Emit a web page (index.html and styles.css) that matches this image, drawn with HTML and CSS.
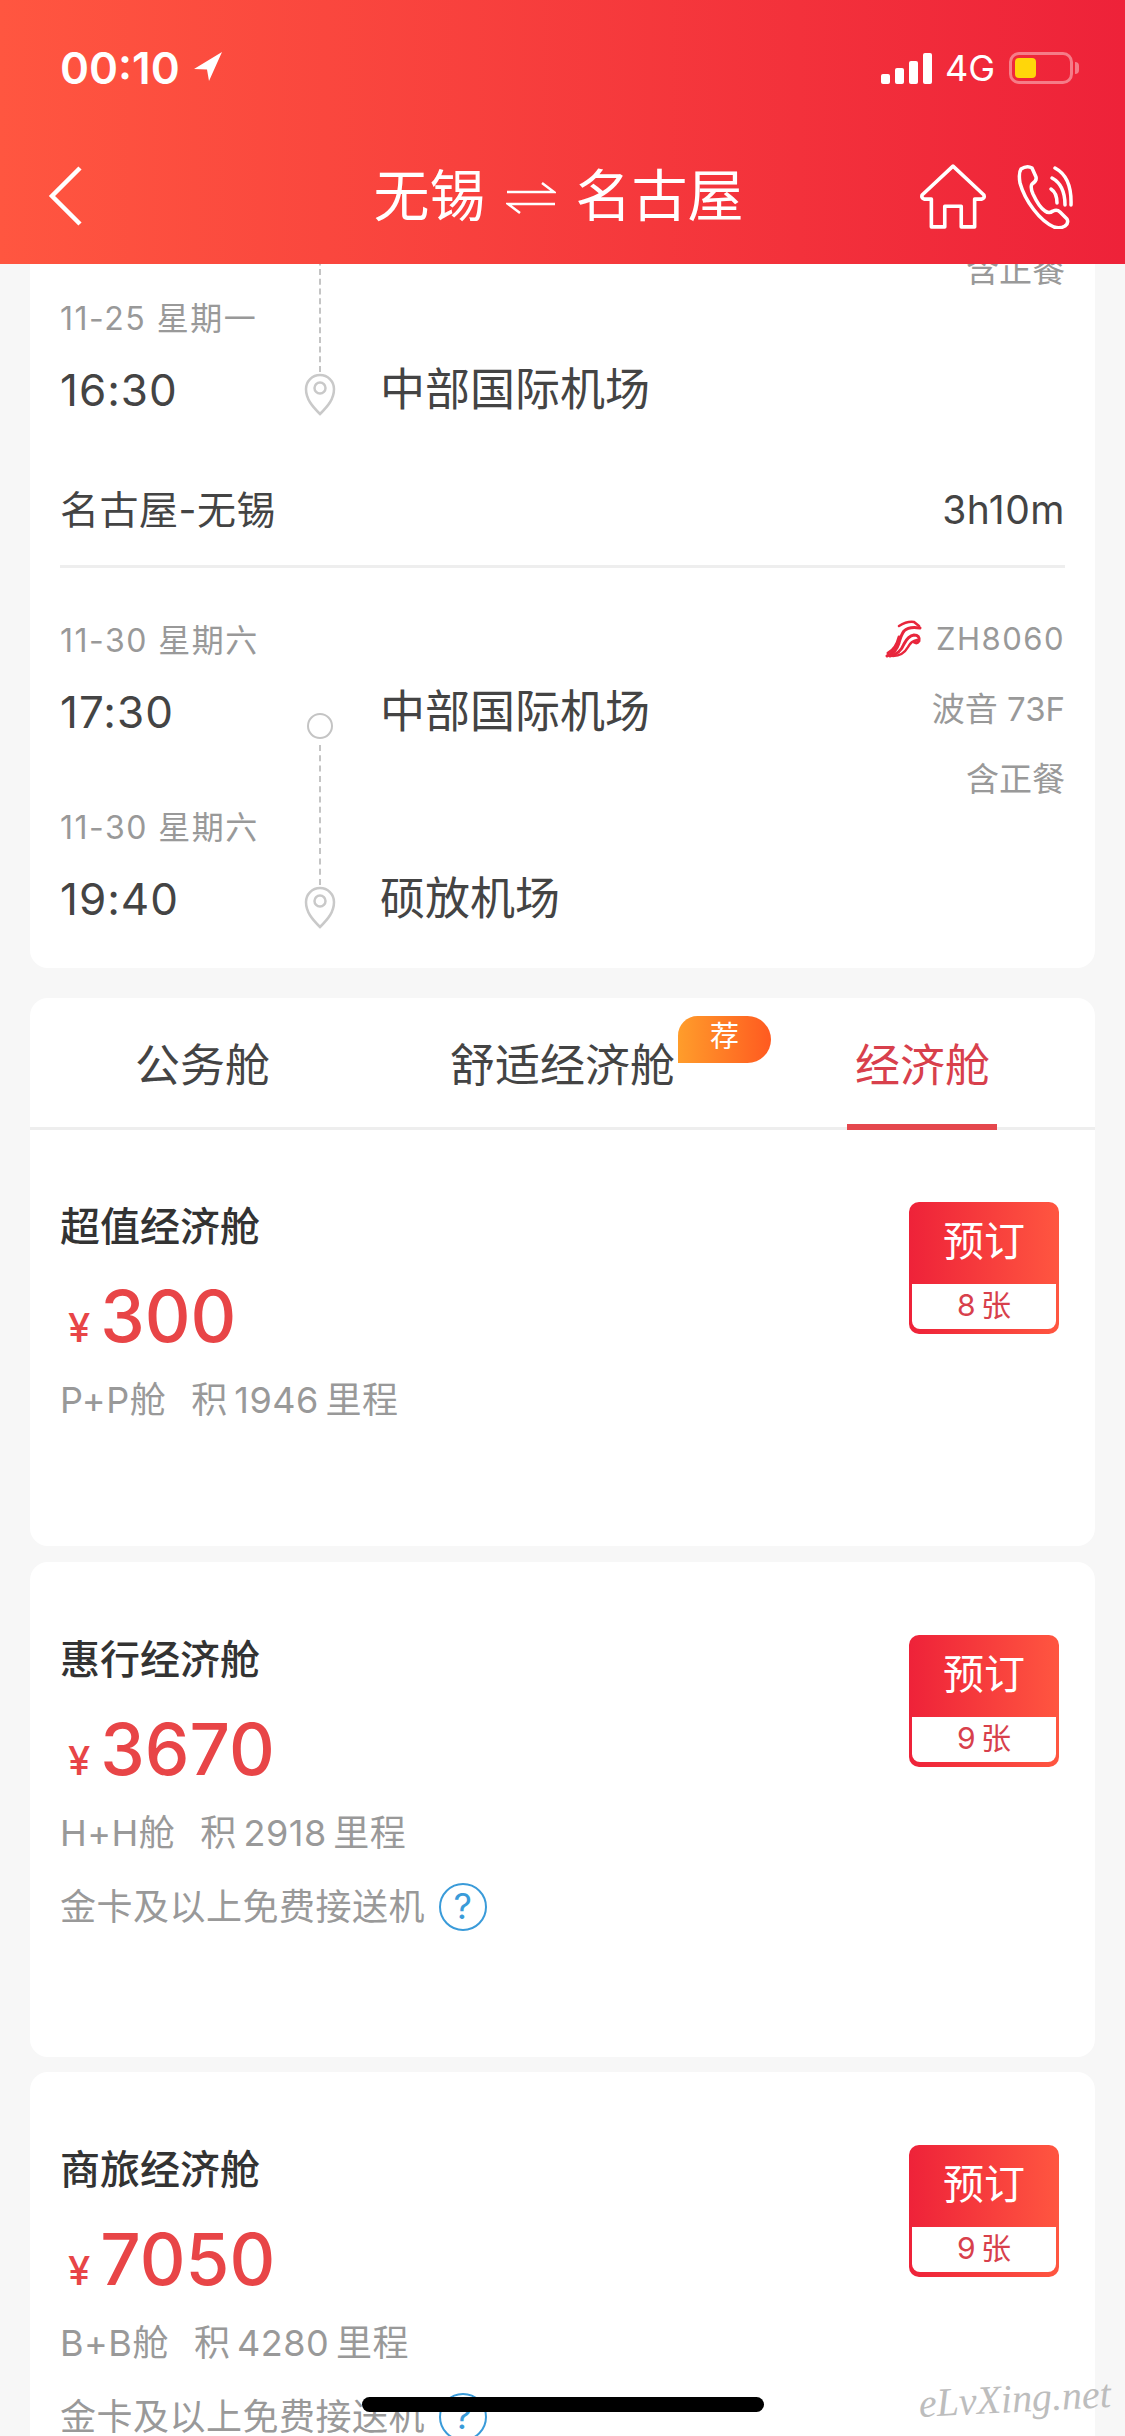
FILE: index.html
```html
<!DOCTYPE html>
<html lang="zh-CN">
<head>
  <meta charset="UTF-8">
  <title>无锡 - 名古屋</title>
  <link rel="stylesheet" href="styles.css">
</head>
<body>
  <div class="phone">
    <header class="header">
      <div class="status">
        <div class="status-time">00:10
          <svg class="status-arrow" viewBox="0 0 28 29"><path d="M28 0L0 17l13 .5L15 29z" fill="#fff"/></svg>
        </div>
        <div class="status-right">
          <div class="signal"><i class="b1"></i><i class="b2"></i><i class="b3"></i><i class="b4"></i></div>
          <span class="net">4G</span>
          <div class="battery"><i class="battery-fill"></i></div>
          <i class="battery-nub"></i>
        </div>
      </div>
      <nav class="nav">
        <svg class="back" viewBox="0 0 34 60"><path d="M32 2L4 30l28 28" fill="none" stroke="#fff" stroke-width="4.5"/></svg>
        <h1 class="nav-title">无锡
          <svg class="swap" viewBox="0 0 50 34"><path d="M1 11h47L36 2M49 23H2l12 9" fill="none" stroke="#fff" stroke-width="2.5"/></svg>
          名古屋</h1>
        <div class="nav-icons">
          <svg class="home" viewBox="0 0 66 63"><path d="M33 2L63 30q1 3-2 4h-7v27H41V41H25v20H12V34H5q-3-1-2-4z" fill="none" stroke="#fff" stroke-width="3.5" stroke-linejoin="round"/></svg>
          <svg class="call" viewBox="0 0 56 63"><g fill="none" stroke="#fff" stroke-width="3.5" stroke-linecap="round" stroke-linejoin="round"><path d="M4 4q6-4 11-1l4 9q1 4-4 7-2 3 1 10 6 13 12 17 4 3 8 0 4-2 7 1l7 7q2 4-2 7-5 3-11 1C23 56 8 36 3 18 2 12 2 7 4 4z"/><path d="M34 24q6 4 6 14"/><path d="M35 13q13 7 13 27"/><path d="M38 3q17 9 16 37"/></g></svg>
        </div>
      </nav>
    </header>

    <main class="scroller">
      <div class="scroll-inner">
        <section class="card trip">
          <div class="flight flight-cut">
            <div class="flight-date date-row">11-25 星期一</div>
            <div class="dash-cell"><i class="dash dash-top"></i></div>
            <div></div>
            <div class="flight-meta flight-meta-clip"><div>含正餐</div></div>
            <div class="flight-time">16:30</div>
            <div class="dot-cell">
              <svg class="pin" viewBox="0 0 32 44"><path d="M16 42C8 34 2 27 2 17a14 14 0 0 1 28 0c0 10-6 17-14 25z" fill="none" stroke="#c9c9c9" stroke-width="2.5"/><circle cx="16" cy="16" r="5.5" fill="none" stroke="#c9c9c9" stroke-width="2.5"/></svg>
            </div>
            <div class="flight-name">中部国际机场</div>
          </div>

          <div class="route">
            <span>名古屋-无锡</span>
            <span>3h10m</span>
          </div>

          <div class="flight flight-full">
            <div class="flight-date">11-30 星期六</div>
            <div></div>
            <div></div>
            <div class="flight-meta">
              <div class="flight-no">
                <svg class="airline" viewBox="0 0 38 38"><g fill="none" stroke="#e8263c" stroke-linecap="round"><path d="M14 6q8-5 15-4l5 4" stroke-width="2.5"/><path d="M2 36q9-3 12-13 2-8 5-12 5-5 16-3" stroke-width="3"/><path d="M5 36q10-2 14-12 4-8 10-9 6 0 5 6-2 3-5 1" stroke-width="3"/><path d="M8 36q10 0 15-9 3-6 9-7" stroke-width="2.5"/><path d="M3 33q8-4 11-16" stroke-width="3"/></g></svg>
                ZH8060
              </div>
              <div>波音 73F</div>
              <div>含正餐</div>
            </div>
            <div class="flight-time">17:30</div>
            <div class="dot-cell"><i class="ring"></i></div>
            <div class="flight-name">中部国际机场</div>
            <div class="flight-date date-row">11-30 星期六</div>
            <div class="dash-cell"><i class="dash dash-mid"></i></div>
            <div></div>
            <div class="flight-time">19:40</div>
            <div class="dot-cell">
              <svg class="pin pin-low" viewBox="0 0 32 44"><path d="M16 42C8 34 2 27 2 17a14 14 0 0 1 28 0c0 10-6 17-14 25z" fill="none" stroke="#c9c9c9" stroke-width="2.5"/><circle cx="16" cy="16" r="5.5" fill="none" stroke="#c9c9c9" stroke-width="2.5"/></svg>
            </div>
            <div class="flight-name">硕放机场</div>
          </div>
        </section>

        <section class="card cabin">
          <div class="tabs">
            <div class="tab"><span>公务舱</span></div>
            <div class="tab"><span class="tab-label">舒适经济舱<em class="badge">荐</em></span></div>
            <div class="tab tab-active"><span>经济舱</span></div>
          </div>
          <div class="fare fare-first">
            <div class="fare-info">
              <div class="fare-title">超值经济舱</div>
              <div class="fare-price"><small>¥</small>300</div>
              <div class="fare-sub"><span>P+P舱</span><span class="miles">积 1946 里程</span></div>
            </div>
            <button class="book"><span class="book-top">预订</span><span class="book-left">8 张</span></button>
          </div>
        </section>

        <section class="card fare-card">
          <div class="fare">
            <div class="fare-info">
              <div class="fare-title">惠行经济舱</div>
              <div class="fare-price"><small>¥</small>3670</div>
              <div class="fare-sub"><span>H+H舱</span><span class="miles">积 2918 里程</span></div>
              <div class="fare-note">金卡及以上免费接送机 <i class="help">?</i></div>
            </div>
            <button class="book"><span class="book-top">预订</span><span class="book-left">9 张</span></button>
          </div>
        </section>

        <section class="card fare-card">
          <div class="fare">
            <div class="fare-info">
              <div class="fare-title">商旅经济舱</div>
              <div class="fare-price"><small>¥</small>7050</div>
              <div class="fare-sub"><span>B+B舱</span><span class="miles">积 4280 里程</span></div>
              <div class="fare-note">金卡及以上免费接送机 <i class="help">?</i></div>
            </div>
            <button class="book"><span class="book-top">预订</span><span class="book-left">9 张</span></button>
          </div>
        </section>
      </div>
    </main>

    <div class="home-bar"></div>
    <div class="watermark">eLvXing.net</div>
  </div>
</body>
</html>
```

FILE: styles.css
```css
* {
  box-sizing: border-box;
}
body {
  margin: 0;
  font-family: Inter, "Noto Sans CJK SC", sans-serif;
  background: #f7f7f7;
}
.phone {
  position: relative;
  width: 1125px;
  height: 2436px;
  overflow: hidden;
  display: flex;
  flex-direction: column;
}

/* header */
.header {
  height: 264px;
  flex-shrink: 0;
  color: #fff;
  background: linear-gradient(90deg, #ff5640, #ee2239);
}
.status {
  height: 136px;
  padding: 44px 46px 0 60px;
  display: flex;
  align-items: flex-start;
  justify-content: space-between;
}
.status-time {
  font-size: 44px;
  font-weight: 600;
  line-height: 48px;
  display: flex;
  align-items: center;
  gap: 14px;
}
.status-arrow {
  width: 28px;
  height: 29px;
  margin-top: -4px;
}
.status-right {
  height: 48px;
  display: flex;
  align-items: center;
}
.signal {
  display: flex;
  align-items: flex-end;
  gap: 5px;
  height: 31px;
}
.signal i {
  width: 9px;
  background: #fff;
  border-radius: 2px;
}
.b1 { height: 10px; }
.b2 { height: 16px; }
.b3 { height: 23px; }
.b4 { height: 31px; }
.net {
  font-size: 36px;
  margin: 0 14px 0 13px;
}
.battery {
  width: 64px;
  height: 32px;
  padding: 3px;
  border: 3px solid rgba(255, 255, 255, 0.4);
  border-radius: 10px;
}
.battery-fill {
  display: block;
  width: 21px;
  height: 100%;
  background: #ffd60a;
  border-radius: 4px;
}
.battery-nub {
  width: 4px;
  height: 12px;
  margin-left: 2px;
  background: rgba(255, 255, 255, 0.4);
  border-radius: 0 4px 4px 0;
}
.nav {
  height: 128px;
  padding: 30px 52px 0 48px;
  display: grid;
  grid-template-columns: 1fr auto 1fr;
  align-items: start;
}
.back {
  width: 34px;
  height: 60px;
}
.nav-title {
  margin: -3px 0 0 -4px;
  font-size: 56px;
  font-weight: 400;
  line-height: 66px;
  display: flex;
  align-items: center;
  gap: 20px;
}
.swap {
  width: 50px;
  height: 34px;
  margin-top: 4px;
}
.nav-icons {
  justify-self: end;
  display: flex;
  align-items: flex-start;
  gap: 30px;
  margin-top: -2px;
}
.home {
  width: 68px;
  height: 65px;
}
.call {
  width: 56px;
  height: 65px;
}

/* scrolled content */
.scroller {
  flex: 1;
  overflow: hidden;
}
.scroll-inner {
  margin-top: -24px;
  display: flex;
  flex-direction: column;
  padding: 0 30px;
}
.card {
  background: #fff;
  border-radius: 18px;
  padding: 0 30px;
}
.trip {
  height: 728px;
  border-radius: 0 0 18px 18px;
}
.flight {
  display: grid;
  grid-template-columns: 228px 64px 1fr auto;
  color: #444;
}
.flight-cut {
  grid-template-rows: 114px 72px;
}
.flight-date,
.flight-meta {
  font-size: 32px;
  line-height: 70px;
  color: #999;
}
.flight-date {
  white-space: nowrap;
  letter-spacing: 1.5px;
}
.date-row {
  align-self: end;
}
.flight-time {
  font-size: 44px;
  letter-spacing: 1px;
  line-height: 72px;
}
.flight-name {
  font-size: 45px;
  line-height: 72px;
  padding-left: 28px;
}
.flight-meta {
  grid-column: 4;
  grid-row: 1 / span 4;
  font-size: 33px;
  text-align: right;
}
.flight-no {
  display: flex;
  align-items: center;
  justify-content: flex-end;
  gap: 13px;
  margin-top: -2px;
  font-size: 31px;
  letter-spacing: 1.5px;
}
.airline {
  width: 38px;
  height: 38px;
}
.flight-meta-clip {
  grid-row: 1 / span 2;
  margin-top: -5px;
}
.dash-cell,
.dot-cell {
  display: flex;
  justify-content: center;
  align-items: flex-start;
}
.dash {
  width: 0;
  border-left: 2px dashed #c4c4c4;
}
.dash-top {
  height: 132px;
}
.dash-mid {
  height: 140px;
  margin-top: -4px;
}
.pin {
  width: 32px;
  height: 44px;
  margin-top: 18px;
}
.pin-low {
  margin-top: 22px;
}
.ring {
  width: 26px;
  height: 26px;
  margin-top: 37px;
  border: 2px solid #c4c4c4;
  border-radius: 50%;
}
.route {
  margin-top: 48px;
  padding-bottom: 19px;
  border-bottom: 3px solid #eee;
  display: flex;
  justify-content: space-between;
  font-size: 39px;
  letter-spacing: 0.5px;
  line-height: 72px;
  color: #444;
}
.flight-full {
  margin-top: 38px;
  grid-template-rows: 70px 73px 114px 72px;
}

/* cabin tabs */
.cabin {
  margin-top: 30px;
  padding: 0;
  height: 548px;
}
.tabs {
  height: 132px;
  display: grid;
  grid-template-columns: 345px 1fr 345px;
  border-bottom: 3px solid #eee;
}
.tab {
  position: relative;
  display: flex;
  align-items: center;
  justify-content: center;
  height: 129px;
  font-size: 45px;
  color: #444;
}
.tab-active {
  color: #d8404c;
}
.tab-active::after {
  content: "";
  position: absolute;
  left: 97px;
  bottom: -3px;
  width: 150px;
  height: 6px;
  background: #e5474d;
}
.tab-label {
  position: relative;
}
.badge {
  position: absolute;
  left: 100%;
  top: -14px;
  margin-left: 3px;
  width: 93px;
  height: 47px;
  border-radius: 20px 24px 24px 0;
  background: linear-gradient(90deg, #ff9d2b, #ff5a20);
  color: #fff;
  font-size: 29px;
  font-style: normal;
  line-height: 42px;
  text-align: center;
}

/* fares */
.fare-card {
  margin-top: 16px;
  height: 495px;
}
.fare-card:last-child {
  margin-top: 15px;
  height: 500px;
}
.fare {
  display: flex;
  justify-content: space-between;
  padding-top: 68px;
}
.fare-first {
  padding: 67px 36px 0 30px;
}
.fare-card {
  padding-right: 36px;
}
.fare-title {
  font-size: 40px;
  font-weight: 500;
  line-height: 60px;
  color: #333;
}
.fare-price {
  margin-top: 14px;
  font-size: 71px;
  font-weight: 500;
  line-height: 90px;
  color: #e84547;
  padding-left: 8px;
}
.fare-price small {
  font-size: 40px;
  margin-right: 10px;
}
.fare-sub {
  margin-top: -3px;
  font-size: 36px;
  letter-spacing: 0.5px;
  line-height: 60px;
  color: #999;
  display: flex;
  gap: 25px;
}
.miles {
  word-spacing: -4px;
}
.fare-note {
  margin-top: 14px;
  font-size: 36px;
  letter-spacing: 0.5px;
  line-height: 60px;
  color: #999;
  display: flex;
  align-items: center;
  gap: 14px;
}
.help {
  width: 48px;
  height: 48px;
  border: 2.5px solid #3a9bd9;
  border-radius: 50%;
  color: #3a9bd9;
  font-size: 36px;
  font-style: normal;
  line-height: 42px;
  text-align: center;
}
.book {
  width: 150px;
  height: 132px;
  margin-top: 5px;
  padding: 0 3px 5px;
  border: none;
  border-radius: 10px;
  background: linear-gradient(90deg, #ee2239, #ff5640);
  display: flex;
  flex-direction: column;
  font-family: inherit;
}
.book-top {
  height: 82px;
  width: 100%;
  color: #fff;
  font-size: 41px;
  line-height: 78px;
  text-align: center;
}
.book-left {
  flex: 1;
  width: 100%;
  background: #fff;
  color: #d8404c;
  font-size: 30px;
  word-spacing: -3px;
  line-height: 42px;
  text-align: center;
  border-radius: 0 0 8px 8px;
}

/* overlays */
.home-bar {
  position: absolute;
  left: 362px;
  top: 2397px;
  width: 402px;
  height: 15px;
  background: #000;
  border-radius: 8px;
}
.watermark {
  position: absolute;
  left: 920px;
  top: 2380px;
  font-family: "Liberation Serif", serif;
  font-style: italic;
  font-size: 40px;
  color: #bdbdbd;
  transform: rotate(-3deg);
  transform-origin: left bottom;
}
```
